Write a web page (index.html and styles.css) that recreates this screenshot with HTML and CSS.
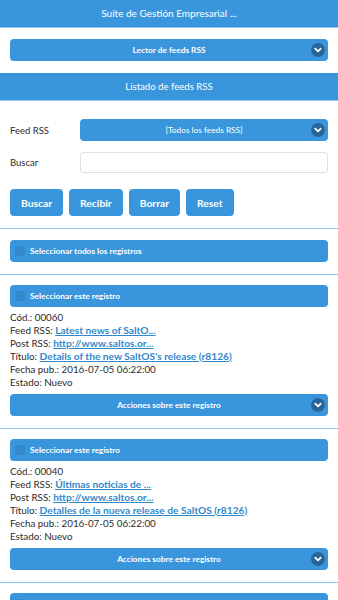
FILE: index.html
```html
<!DOCTYPE html>
<html lang="es">
<head>
  <meta charset="UTF-8" />
  <title>Listado de feeds RSS</title>
  <link rel="stylesheet" href="styles.css">
</head>
<body>

  <!-- Cabecera -->
  <div class="topbar">Suite de Gestión Empresarial ...</div>

  <div class="block first">
    <div class="selectbtn">
      <span>Lector de feeds RSS</span>
      <svg class="chev" viewBox="0 0 14 14"><circle cx="7" cy="7" r="7"/><path d="M4.3 5.6 L7 8.3 L9.7 5.6"/></svg>
    </div>
  </div>

  <div class="titlebar">Listado de feeds RSS</div>

  <!-- Filtros -->
  <div class="filters">
    <div class="row">
      <label>Feed RSS</label>
      <div class="selectbtn grow">
        <span class="light">[Todos los feeds RSS]</span>
        <svg class="chev" viewBox="0 0 14 14"><circle cx="7" cy="7" r="7"/><path d="M4.3 5.6 L7 8.3 L9.7 5.6"/></svg>
      </div>
    </div>
    <div class="row">
      <label>Buscar</label>
      <input class="grow" type="text" />
    </div>
    <div class="buttons">
      <button>Buscar</button>
      <button>Recibir</button>
      <button>Borrar</button>
      <button>Reset</button>
    </div>
  </div>

  <div class="block">
    <div class="checkbar"><span class="box"></span>Seleccionar todos los registros</div>
  </div>

  <!-- Registros -->
  <div class="block record">
    <div class="checkbar"><span class="box"></span>Seleccionar este registro</div>
    <div class="info">
      <div>Cód.: 00060</div>
      <div>Feed RSS: <a href="#">Latest news of SaltO...</a></div>
      <div>Post RSS: <a href="#">http://www.saltos.or...</a></div>
      <div>Título: <a href="#">Details of the new SaltOS's release (r8126)</a></div>
      <div>Fecha pub.: 2016-07-05 06:22:00</div>
      <div>Estado: Nuevo</div>
    </div>
    <div class="selectbtn">
      <span>Acciones sobre este registro</span>
      <svg class="chev" viewBox="0 0 14 14"><circle cx="7" cy="7" r="7"/><path d="M4.3 5.6 L7 8.3 L9.7 5.6"/></svg>
    </div>
  </div>

  <div class="block record">
    <div class="checkbar"><span class="box"></span>Seleccionar este registro</div>
    <div class="info">
      <div>Cód.: 00040</div>
      <div>Feed RSS: <a href="#">Últimas noticias de ...</a></div>
      <div>Post RSS: <a href="#">http://www.saltos.or...</a></div>
      <div>Título: <a href="#">Detalles de la nueva release de SaltOS (r8126)</a></div>
      <div>Fecha pub.: 2016-07-05 06:22:00</div>
      <div>Estado: Nuevo</div>
    </div>
    <div class="selectbtn">
      <span>Acciones sobre este registro</span>
      <svg class="chev" viewBox="0 0 14 14"><circle cx="7" cy="7" r="7"/><path d="M4.3 5.6 L7 8.3 L9.7 5.6"/></svg>
    </div>
  </div>

  <div class="block record">
    <div class="checkbar"><span class="box"></span>Seleccionar este registro</div>
  </div>

</body>
</html>
```

FILE: styles.css
```css
html, body {
  margin: 0;
  padding: 0;
  background: #fff;
  font-family: Lato, "Open Sans", sans-serif;
  color: #2b2b2b;
  overflow: hidden;
}

/* Cabecera */
.topbar {
  height: 27px;
  line-height: 27px;
  background: #3a96dc;
  color: #fff;
  font-size: 10px;
  text-align: center;
  border-bottom: 1px solid #8cc6f0;
}

.titlebar {
  height: 27px;
  line-height: 27px;
  background: #3a96dc;
  color: #fff;
  font-size: 9.6px;
  text-align: center;
  border-bottom: 1px solid #8cc6f0;
}

.block {
  padding: 11px 10px 12px;
  border-bottom: 1px solid #8cc6f0;
}

.block.first {
  border-bottom: none;
}

.record {
  padding-top: 10px;
}

.selectbtn {
  position: relative;
  height: 22px;
  background: #3a96dc;
  border-radius: 4px;
  display: flex;
  align-items: center;
  justify-content: center;
  color: #fff;
  font-size: 8.3px;
  font-weight: bold;
}

.selectbtn .light {
  font-weight: normal;
}

.chev {
  position: absolute;
  right: 3px;
  top: 4px;
  width: 14px;
  height: 14px;
}

.chev circle {
  fill: #2a6599;
}

.chev path {
  fill: none;
  stroke: #fff;
  stroke-width: 1.8;
  stroke-linecap: round;
  stroke-linejoin: round;
}

/* Filtros */
.filters {
  padding: 18px 10px 12px;
  border-bottom: 1px solid #8cc6f0;
}

.row {
  display: flex;
  align-items: center;
  margin-bottom: 11px;
}

.row label {
  width: 70px;
  font-size: 9.5px;
}

.grow {
  flex: 1;
}

.row input {
  height: 21px;
  box-sizing: border-box;
  border: 1px solid #e0e0e0;
  border-radius: 3px;
  margin: 0;
  padding: 0 6px;
}

.buttons {
  display: flex;
  gap: 6px;
  margin-top: 16px;
}

.buttons button {
  height: 27px;
  padding: 0 11px;
  background: #3a96dc;
  color: #fff;
  border: none;
  border-radius: 4px;
  font-family: Lato, sans-serif;
  font-size: 10.3px;
  font-weight: bold;
}

.checkbar {
  height: 22px;
  background: #3a96dc;
  border-radius: 4px;
  display: flex;
  align-items: center;
  color: #fff;
  font-size: 8.3px;
  font-weight: bold;
}

.checkbar .box {
  width: 10px;
  height: 10px;
  background: #3389cb;
  border-radius: 2px;
  margin: 0 5px 0 5px;
}

.info {
  padding: 4px 0 5px;
  font-size: 9.8px;
  line-height: 13px;
}

.info a {
  color: #38c;
  font-weight: bold;
  font-size: 10.2px;
}
```
